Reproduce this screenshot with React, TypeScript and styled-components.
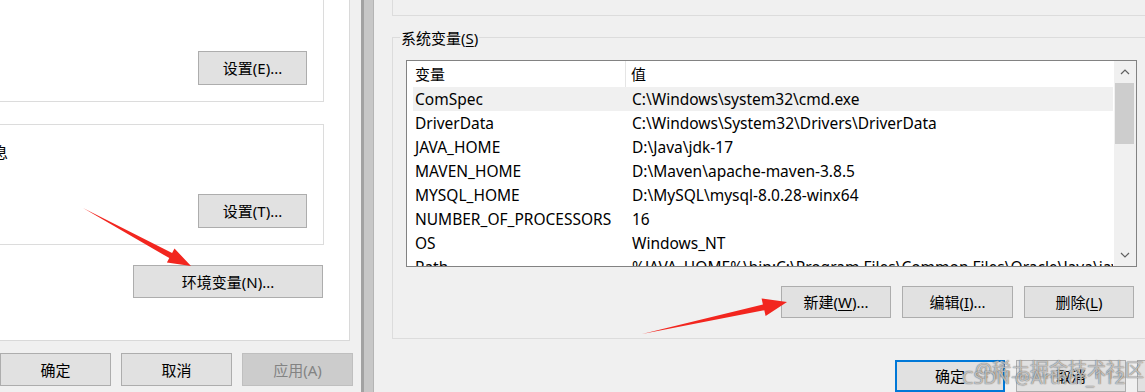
import React from "react";
import styled, { createGlobalStyle } from "styled-components";

const GlobalStyle = createGlobalStyle`
  html, body {
    margin: 0;
    padding: 0;
    background: #f0f0f0;
  }
  body {
    font-family: "Noto Sans", "Noto Sans CJK SC", sans-serif;
    font-size: 15px;
    color: #000;
  }
`;

const Screen = styled.div`
  position: relative;
  display: flex;
  width: 1145px;
  height: 392px;
  overflow: hidden;
  background: #f0f0f0;
`;

const LeftWindow = styled.div`
  width: 361px;
  flex-shrink: 0;
  display: flex;
  flex-direction: column;
`;

const TabPage = styled.div`
  width: 350px;
  height: 341px;
  box-sizing: border-box;
  background: #fff;
  border-right: 1px solid #d9d9d9;
  border-bottom: 1px solid #d9d9d9;
  display: flex;
  flex-direction: column;
  overflow: hidden;
`;

const Group = styled.div<{ $top: number; $height: number }>`
  box-sizing: border-box;
  margin-left: -330px;
  margin-top: ${(p) => p.$top}px;
  width: 654px;
  height: ${(p) => p.$height}px;
  flex-shrink: 0;
  border: 1px solid #dcdcdc;
  display: flex;
  flex-direction: column;
`;

const GroupText = styled.div`
  padding: 17px 0 0 127px;
  line-height: 20px;
  white-space: nowrap;
`;

const GroupActions = styled.div`
  margin-top: auto;
  display: flex;
  justify-content: flex-end;
  padding: 0 16px 16px 0;
`;

const PageAction = styled.div`
  display: flex;
  justify-content: flex-end;
  padding: 20px 26px 0 0;
`;

const DialogButtons = styled.div<{ $gap: number }>`
  display: flex;
  gap: ${(p) => p.$gap}px;
`;

const LeftFooter = styled(DialogButtons)`
  justify-content: flex-end;
  padding: 12px 8px 0 0;
`;

const Button = styled.div<{
  $w: number;
  $h?: number;
  $primary?: boolean;
  $off?: boolean;
}>`
  width: ${(p) => p.$w}px;
  height: ${(p) => p.$h ?? 32}px;
  flex-shrink: 0;
  box-sizing: border-box;
  background: ${(p) => (p.$off ? "#cccccc" : "#e1e1e1")};
  border: 1px solid
    ${(p) => (p.$primary ? "#0078d7" : p.$off ? "#bfbfbf" : "#adadad")};
  box-shadow: ${(p) => (p.$primary ? "inset 0 0 0 1px #0078d7" : "none")};
  color: ${(p) => (p.$off ? "#838383" : "#000")};
  display: flex;
  align-items: center;
  justify-content: center;
  white-space: nowrap;
  line-height: 20px;

  u {
    text-decoration: underline;
    text-underline-offset: 2px;
  }
`;

const Divider = styled.div`
  width: 13px;
  flex-shrink: 0;
  background: linear-gradient(
    to right,
    #a2a2a2 0 3px,
    #c7c7c7 3px 12px,
    #b4b4b4 12px
  );
`;

const RightWindow = styled.div`
  flex: 1;
  display: flex;
  flex-direction: column;
  padding-left: 18px;
  min-width: 0;
`;

const UserGroup = styled.div`
  box-sizing: border-box;
  margin-top: -40px;
  height: 56px;
  width: 800px;
  flex-shrink: 0;
  border: 1px solid #dcdcdc;
`;

const SystemGroup = styled.div`
  box-sizing: border-box;
  margin-top: 21px;
  width: 759px;
  height: 302px;
  flex-shrink: 0;
  border: 1px solid #dcdcdc;
  display: flex;
  flex-direction: column;
`;

const Legend = styled.div`
  align-self: flex-start;
  margin: -10px 0 0 7px;
  padding: 0 1px;
  line-height: 20px;
  background: #f0f0f0;

  u {
    text-underline-offset: 2px;
  }
`;

const ListBox = styled.div`
  box-sizing: border-box;
  margin: 12px 13px 0;
  height: 207px;
  border: 1px solid #828282;
  background: #fff;
  display: flex;
`;

const ListBody = styled.div`
  flex: 1;
  min-width: 0;
  overflow: hidden;
  padding-left: 6px;
  margin-right: 1px;
  font-size: 15.5px;
`;

const HeaderRow = styled.div`
  display: grid;
  grid-template-columns: 213px 1fr;
  height: 26px;
  line-height: 26px;
  font-size: 15px;
`;

const HeaderCell = styled.div<{ $divider?: boolean }>`
  padding-left: ${(p) => (p.$divider ? 2 : 5)}px;
  border-right: ${(p) => (p.$divider ? "1px solid #e5e5e5" : "none")};
`;

const Row = styled.div<{ $active?: boolean }>`
  display: grid;
  grid-template-columns: 217px 1fr;
  height: 24px;
  line-height: 24px;
  background: ${(p) => (p.$active ? "#f0f0f0" : "transparent")};
  white-space: nowrap;
`;

const Cell = styled.div`
  padding-left: 2px;
  overflow: hidden;
`;

const ScrollBar = styled.div`
  width: 22px;
  flex-shrink: 0;
  background: #f0f0f0;
  display: flex;
  flex-direction: column;
`;

const ScrollArrow = styled.div`
  height: 22px;
  display: flex;
  align-items: center;
  justify-content: center;
`;

const Thumb = styled.div`
  height: 61px;
  margin: 0 2px 0 1px;
  background: #cdcdcd;
`;

const Track = styled.div`
  flex: 1;
`;

const ListActions = styled(DialogButtons)`
  justify-content: flex-end;
  padding: 19px 16px 0 0;
`;

const RightFooter = styled(DialogButtons)`
  padding: 21px 0 0 503px;
`;

const Overlay = styled.svg`
  position: absolute;
  left: 0;
  top: 0;
  pointer-events: none;
`;

const Watermark = styled.div<{ $x: number; $y: number; $size: number }>`
  position: absolute;
  left: ${(p) => p.$x}px;
  top: ${(p) => p.$y}px;
  font-size: ${(p) => p.$size}px;
  line-height: 1;
  white-space: nowrap;
  color: rgba(255, 255, 255, 0.6);
  text-shadow: 0 0 1px rgba(60, 60, 60, 0.7), 0 0 1px rgba(60, 60, 60, 0.5);
  pointer-events: none;
`;

type EnvVar = { name: string; value: string };

const vars: EnvVar[] = [
  { name: "ComSpec", value: "C:\\Windows\\system32\\cmd.exe" },
  { name: "DriverData", value: "C:\\Windows\\System32\\Drivers\\DriverData" },
  { name: "JAVA_HOME", value: "D:\\Java\\jdk-17" },
  { name: "MAVEN_HOME", value: "D:\\Maven\\apache-maven-3.8.5" },
  { name: "MYSQL_HOME", value: "D:\\MySQL\\mysql-8.0.28-winx64" },
  { name: "NUMBER_OF_PROCESSORS", value: "16" },
  { name: "OS", value: "Windows_NT" },
  {
    name: "Path",
    value:
      "%JAVA_HOME%\\bin;C:\\Program Files\\Common Files\\Oracle\\Java\\javapath;",
  },
];

const Chevron = ({ up }: { up?: boolean }) => (
  <svg width="10" height="6" viewBox="0 0 10 6">
    <polyline
      points={up ? "1,5 5,1 9,5" : "1,1 5,5 9,1"}
      fill="none"
      stroke="#606060"
      strokeWidth="1.2"
    />
  </svg>
);

export default function App() {
  return (
    <>
      <GlobalStyle />
      <Screen>
        <LeftWindow>
          <TabPage>
            <Group $top={-40} $height={142}>
              <GroupActions>
                <Button $w={109} $h={34}>设置(E)...</Button>
              </GroupActions>
            </Group>
            <Group $top={22} $height={121}>
              <GroupText>系统启动、系统故障和调试信息</GroupText>
              <GroupActions>
                <Button $w={109} $h={34}>设置(T)...</Button>
              </GroupActions>
            </Group>
            <PageAction>
              <Button $w={190} $h={33}>环境变量(N)...</Button>
            </PageAction>
          </TabPage>
          <LeftFooter $gap={10}>
            <Button $w={111} $h={33}>确定</Button>
            <Button $w={111} $h={33}>取消</Button>
            <Button $w={111} $h={33} $off>
              应用(A)
            </Button>
          </LeftFooter>
        </LeftWindow>

        <Divider />

        <RightWindow>
          <UserGroup />
          <SystemGroup>
            <Legend>
              系统变量(<u>S</u>)
            </Legend>
            <ListBox>
              <ListBody>
                <HeaderRow>
                  <HeaderCell $divider>变量</HeaderCell>
                  <HeaderCell>值</HeaderCell>
                </HeaderRow>
                {vars.map((v, i) => (
                  <Row key={v.name} $active={i === 0}>
                    <Cell>{v.name}</Cell>
                    <Cell>{v.value}</Cell>
                  </Row>
                ))}
              </ListBody>
              <ScrollBar>
                <ScrollArrow>
                  <Chevron up />
                </ScrollArrow>
                <Thumb />
                <Track />
                <ScrollArrow>
                  <Chevron />
                </ScrollArrow>
              </ScrollBar>
            </ListBox>
            <ListActions $gap={11}>
              <Button $w={110}>
                新建(<u>W</u>)...
              </Button>
              <Button $w={111}>
                编辑(<u>I</u>)...
              </Button>
              <Button $w={110}>
                删除(<u>L</u>)
              </Button>
            </ListActions>
          </SystemGroup>
          <RightFooter $gap={11}>
            <Button $w={110} $primary>
              确定
            </Button>
            <Button $w={110}>取消</Button>
            <Button $w={110}>应用(A)</Button>
          </RightFooter>
        </RightWindow>

        <Overlay width="1145" height="392" viewBox="0 0 1145 392">
          <polygon
            points="83,208 172.1,252.9 174.5,248.5 191,266 166.9,262.5 169.3,258.1"
            fill="#f2261f"
          />
          <polygon
            points="642,334 762.9,304.4 761.6,298.5 787,302 765.6,316.1 764.3,310.2"
            fill="#f2261f"
          />
        </Overlay>
        <Watermark $x={975} $y={361} $size={19}>
          @稀土掘金技术社区
        </Watermark>
        <Watermark $x={962} $y={368} $size={18}>
          CSDN @Arthur_112
        </Watermark>
      </Screen>
    </>
  );
}
